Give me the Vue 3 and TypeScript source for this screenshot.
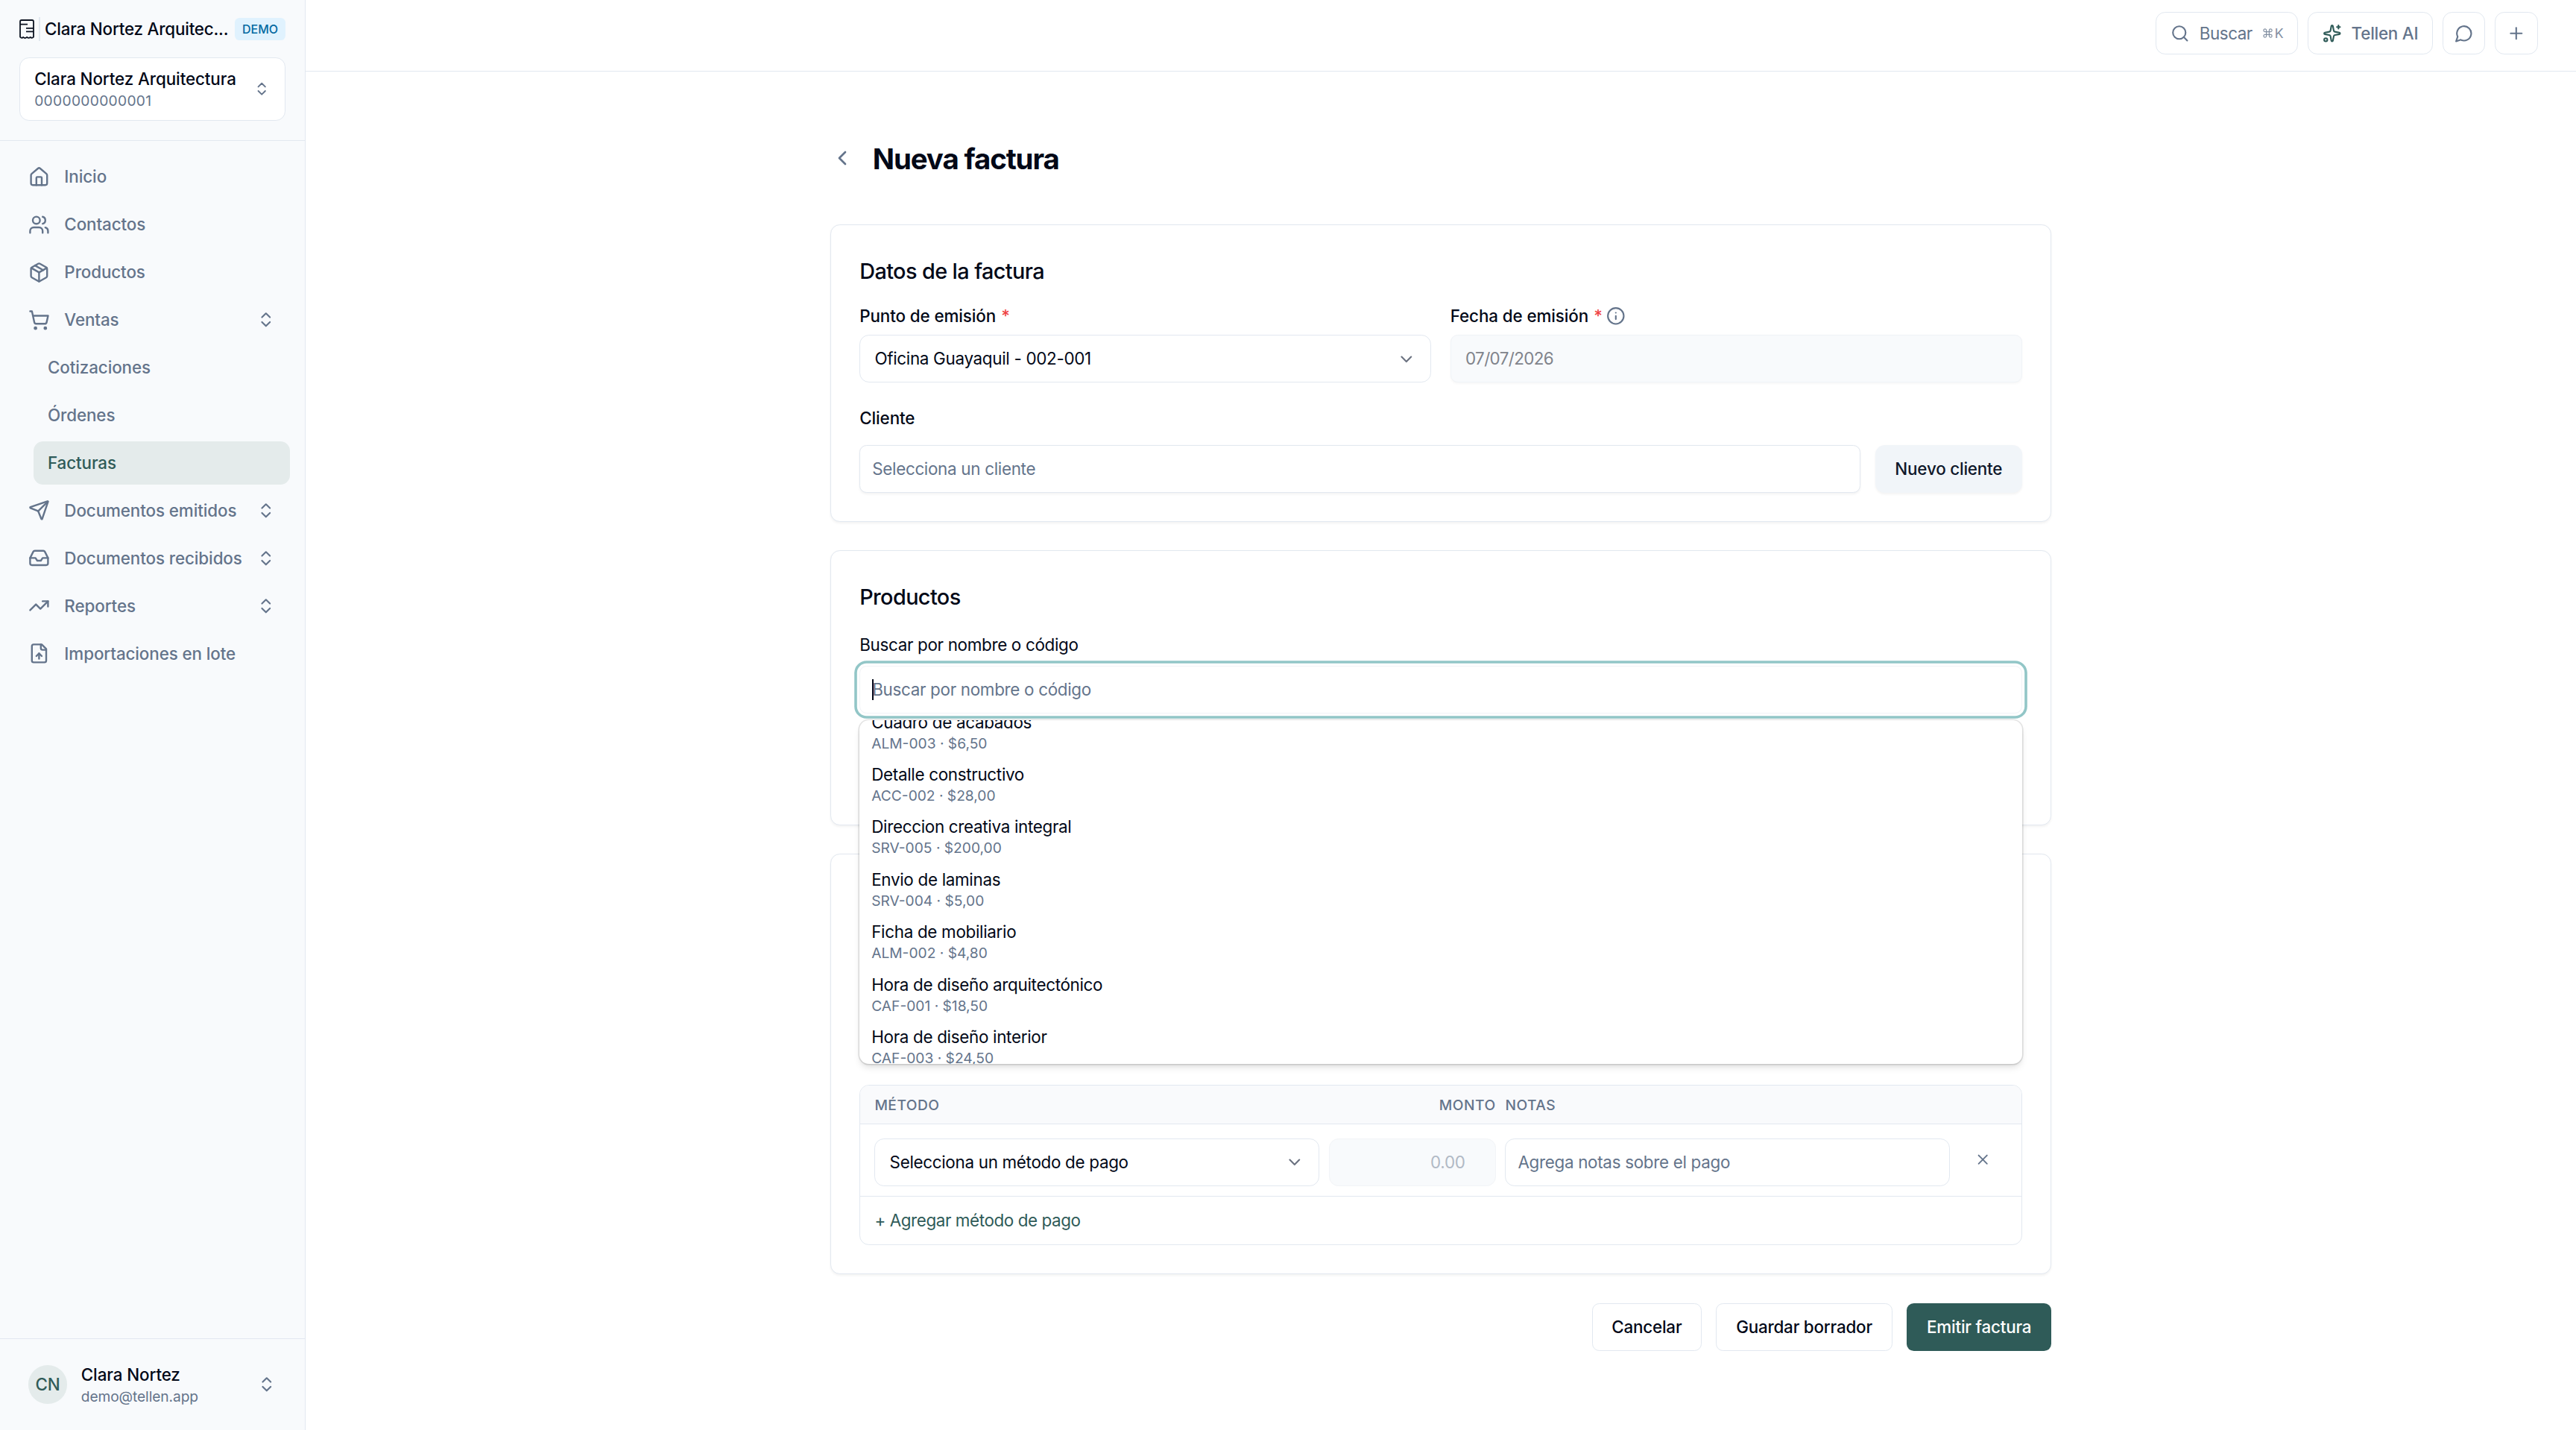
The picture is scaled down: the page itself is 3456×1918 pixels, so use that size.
<script setup lang="ts">
interface NavItem {
  label: string
  icon?: string[]
  expandable?: boolean
  child?: boolean
  active?: boolean
}

interface Product {
  name: string
  code: string
  price: string
}

const icons: Record<string, string[]> = {
  home: [
    'M15 21v-8a1 1 0 0 0-1-1h-4a1 1 0 0 0-1 1v8',
    'M3 10a2 2 0 0 1 .709-1.528l7-5.999a2 2 0 0 1 2.582 0l7 5.999A2 2 0 0 1 21 10v9a2 2 0 0 1-2 2H5a2 2 0 0 1-2-2z',
  ],
  users: [
    'M16 21v-2a4 4 0 0 0-4-4H6a4 4 0 0 0-4 4v2',
    'M5 7a4 4 0 1 0 8 0a4 4 0 1 0-8 0',
    'M22 21v-2a4 4 0 0 0-3-3.87',
    'M16 3.13a4 4 0 0 1 0 7.75',
  ],
  box: [
    'M11 21.73a2 2 0 0 0 2 0l7-4A2 2 0 0 0 21 16V8a2 2 0 0 0-1-1.73l-7-4a2 2 0 0 0-2 0l-7 4A2 2 0 0 0 3 8v8a2 2 0 0 0 1 1.73z',
    'M12 22V12',
    'm3.3 7 8.7 5 8.7-5',
    'm7.5 4.27 9 5.15',
  ],
  cart: [
    'M7 21a1 1 0 1 0 2 0a1 1 0 1 0-2 0',
    'M18 21a1 1 0 1 0 2 0a1 1 0 1 0-2 0',
    'M2.05 2.05h2l2.66 12.42a2 2 0 0 0 2 1.58h9.78a2 2 0 0 0 1.95-1.57l1.65-7.43H5.12',
  ],
  send: [
    'M14.536 21.686a.5.5 0 0 0 .937-.024l6.5-19a.496.496 0 0 0-.635-.635l-19 6.5a.5.5 0 0 0-.024.937l7.93 3.18a2 2 0 0 1 1.112 1.11z',
    'm21.854 2.147-10.94 10.939',
  ],
  inbox: [
    'M22 12h-6l-2 3h-4l-2-3H2',
    'M5.45 5.11 2 12v6a2 2 0 0 0 2 2h16a2 2 0 0 0 2-2v-6l-3.45-6.89A2 2 0 0 0 16.76 4H7.24a2 2 0 0 0-1.79 1.11z',
  ],
  trend: ['m22 7-8.5 8.5-5-5L2 17', 'M16 7h6v6'],
  fileUp: [
    'M15 2H6a2 2 0 0 0-2 2v16a2 2 0 0 0 2 2h12a2 2 0 0 0 2-2V7Z',
    'M14 2v4a2 2 0 0 0 2 2h4',
    'M12 12v6',
    'm15 15-3-3-3 3',
  ],
}

const nav: NavItem[] = [
  { label: 'Inicio', icon: icons.home },
  { label: 'Contactos', icon: icons.users },
  { label: 'Productos', icon: icons.box },
  { label: 'Ventas', icon: icons.cart, expandable: true },
  { label: 'Cotizaciones', child: true },
  { label: 'Órdenes', child: true },
  { label: 'Facturas', child: true, active: true },
  { label: 'Documentos emitidos', icon: icons.send, expandable: true },
  { label: 'Documentos recibidos', icon: icons.inbox, expandable: true },
  { label: 'Reportes', icon: icons.trend, expandable: true },
  { label: 'Importaciones en lote', icon: icons.fileUp },
]

const products: Product[] = [
  { name: 'Cuadro de acabados', code: 'ALM-003', price: '$6,50' },
  { name: 'Detalle constructivo', code: 'ACC-002', price: '$28,00' },
  { name: 'Direccion creativa integral', code: 'SRV-005', price: '$200,00' },
  { name: 'Envio de laminas', code: 'SRV-004', price: '$5,00' },
  { name: 'Ficha de mobiliario', code: 'ALM-002', price: '$4,80' },
  { name: 'Hora de diseño arquitectónico', code: 'CAF-001', price: '$18,50' },
  { name: 'Hora de diseño interior', code: 'CAF-003', price: '$24,50' },
]
</script>

<template>
  <div class="app">
    <aside class="sidebar">
      <div class="side-head">
        <div class="brand">
          <svg class="logo" viewBox="0 0 20 26">
            <path d="M1 23.6V3.2C1 1.9 1.8 1 3 1h14c1.2 0 2 .9 2 2.2v20.4c-1.5 1.5-3 1.5-4.2.2-1.3 1.3-3.300 1.300-4.800 0-1.400 1.300-3.500 1.300-4.800 0C4 25.100 2.500 25.100 1 23.600z" />
            <path d="M1 6.600h10M9 11.800h10M9 16.300h10" />
          </svg>
          <span class="brand-bar"></span>
          <span class="brand-name">Clara Nortez Arquitec...</span>
          <span class="badge">DEMO</span>
        </div>
        <div class="org">
          <div>
            <div class="org-name">Clara Nortez Arquitectura</div>
            <div class="org-id">0000000000001</div>
          </div>
          <svg class="icon i14" viewBox="0 0 24 24"><path d="m7 15 5 5 5-5" /><path d="m7 9 5-5 5 5" /></svg>
        </div>
      </div>

      <nav class="nav">
        <a v-for="item in nav" :key="item.label" class="nav-item" :class="{ child: item.child, active: item.active }">
          <svg v-if="item.icon" class="icon i18" viewBox="0 0 24 24">
            <path v-for="d in item.icon" :key="d" :d="d" />
          </svg>
          <span class="nav-label">{{ item.label }}</span>
          <svg v-if="item.expandable" class="icon i16" viewBox="0 0 24 24"><path d="m7 15 5 5 5-5" /><path d="m7 9 5-5 5 5" /></svg>
        </a>
      </nav>

      <div class="user">
        <span class="avatar">CN</span>
        <div class="user-text">
          <div class="user-name">Clara Nortez</div>
          <div class="user-mail">demo@tellen.app</div>
        </div>
        <svg class="icon i16" viewBox="0 0 24 24"><path d="m7 15 5 5 5-5" /><path d="m7 9 5-5 5 5" /></svg>
      </div>
    </aside>

    <div class="main">
      <header class="topbar">
        <button class="tool search">
          <svg class="icon i16" viewBox="0 0 24 24"><circle cx="11" cy="11" r="8" /><path d="m21 21-4.3-4.3" /></svg>
          <span>Buscar</span>
          <span class="kbd"><svg class="cmd" viewBox="0 0 24 24"><path d="M15 6v12a3 3 0 1 0 3-3H6a3 3 0 1 0 3 3V6a3 3 0 1 0-3 3h12a3 3 0 1 0-3-3" /></svg>K</span>
        </button>
        <button class="tool ai">
          <svg class="icon i16 green" viewBox="0 0 24 24">
            <path d="M11.017 2.814a1 1 0 0 1 1.966 0l1.051 5.558a2 2 0 0 0 1.594 1.594l5.558 1.051a1 1 0 0 1 0 1.966l-5.558 1.051a2 2 0 0 0-1.594 1.594l-1.051 5.558a1 1 0 0 1-1.966 0l-1.051-5.558a2 2 0 0 0-1.594-1.594l-5.558-1.051a1 1 0 0 1 0-1.966l5.558-1.051a2 2 0 0 0 1.594-1.594z" />
            <path d="M20 2v4" /><path d="M22 4h-4" /><circle cx="4" cy="20" r="2" />
          </svg>
          <span>Tellen AI</span>
        </button>
        <button class="tool square">
          <svg class="icon i16" viewBox="0 0 24 24"><path d="M7.9 20A9 9 0 1 0 4 16.1L2 22Z" /></svg>
        </button>
        <button class="tool square">
          <svg class="icon i16" viewBox="0 0 24 24"><path d="M5 12h14" /><path d="M12 5v14" /></svg>
        </button>
      </header>

      <main class="page">
        <div class="title-row">
          <svg class="icon i20" viewBox="0 0 24 24"><path d="m15 18-6-6 6-6" /></svg>
          <h1>Nueva factura</h1>
        </div>

        <section class="card invoice">
          <h2>Datos de la factura</h2>
          <div class="two-cols">
            <div>
              <div class="label">Punto de emisión <span class="req">*</span></div>
              <div class="field select">
                <span>Oficina Guayaquil - 002-001</span>
                <svg class="icon i16 caret-icon" viewBox="0 0 24 24"><path d="m6 9 6 6 6-6" /></svg>
              </div>
            </div>
            <div>
              <div class="label">
                Fecha de emisión <span class="req">*</span>
                <svg class="icon i16 info" viewBox="0 0 24 24"><circle cx="12" cy="12" r="10" /><path d="M12 16v-4" /><path d="M12 8h.01" /></svg>
              </div>
              <div class="field date">07/07/2026</div>
            </div>
          </div>
          <div class="label client-label">Cliente</div>
          <div class="client-row">
            <div class="field text-input shadow">Selecciona un cliente</div>
            <button class="btn soft">Nuevo cliente</button>
          </div>
        </section>

        <section class="card products">
          <h2>Productos</h2>
          <div class="label regular">Buscar por nombre o código</div>
          <div class="combo">
            <div class="field text-input focused"><span class="cursor"></span>Buscar por nombre o código</div>
            <div class="dropdown">
              <div class="options">
                <div v-for="p in products" :key="p.code" class="option">
                  <div class="opt-name">{{ p.name }}</div>
                  <div class="opt-meta">{{ p.code }} · {{ p.price }}</div>
                </div>
              </div>
            </div>
          </div>
        </section>

        <section class="card payments">
          <div class="table">
            <div class="grid thead">
              <span>MÉTODO</span><span class="right">MONTO</span><span>NOTAS</span><span></span>
            </div>
            <div class="grid trow">
              <div class="field select">
                <span>Selecciona un método de pago</span>
                <svg class="icon i16 caret-icon" viewBox="0 0 24 24"><path d="m6 9 6 6 6-6" /></svg>
              </div>
              <div class="field amount">0.00</div>
              <div class="field text-input">Agrega notas sobre el pago</div>
              <div class="remove"><svg class="icon i14" viewBox="0 0 24 24"><path d="M18 6 6 18" /><path d="m6 6 12 12" /></svg></div>
            </div>
            <div class="add">+ Agregar método de pago</div>
          </div>
        </section>

        <div class="actions">
          <button class="btn outline cancel">Cancelar</button>
          <button class="btn outline draft">Guardar borrador</button>
          <button class="btn primary">Emitir factura</button>
        </div>
      </main>
    </div>
  </div>
</template>

<style>
html {
  font-size: 25.6px;
}
body {
  margin: 0;
  background: #fff;
}
</style>

<style scoped>
* {
  box-sizing: border-box;
}
.app {
  display: flex;
  height: 100vh;
  overflow: hidden;
  font-family: Inter, 'Liberation Sans', sans-serif;
  font-size: 0.875rem;
  line-height: 1.25rem;
  letter-spacing: -0.1px;
  color: #020817;
  background: #fff;
}
button {
  font: inherit;
  letter-spacing: inherit;
  color: inherit;
  margin: 0;
}
.icon {
  flex: none;
  display: block;
  fill: none;
  stroke: currentColor;
  stroke-width: 2;
  stroke-linecap: round;
  stroke-linejoin: round;
}
.i14 { width: 0.875rem; height: 0.875rem; }
.i16 { width: 1rem; height: 1rem; }
.i18 { width: 1.125rem; height: 1.125rem; }
.i20 { width: 1.25rem; height: 1.25rem; }

/* Sidebar */
.sidebar {
  flex: none;
  width: 410px;
  display: flex;
  flex-direction: column;
  background: #f8fafc;
  border-right: 1px solid #e2e8f0;
  color: #64748b;
}
.side-head {
  height: 189px;
  padding: 23px 26px 0;
  border-bottom: 1px solid #e2e8f0;
}
.brand {
  display: flex;
  align-items: center;
  height: 32px;
  color: #020817;
  font-weight: 500;
}
.logo {
  flex: none;
  width: 20px;
  height: 26px;
  fill: none;
  stroke: #0b1220;
  stroke-width: 1.8;
  stroke-linejoin: round;
}
.brand-bar {
  flex: none;
  width: 2px;
  height: 32px;
  margin: 0 6px;
  background: #e2e8f0;
}
.brand-name {
  flex: 1;
  white-space: nowrap;
  letter-spacing: -0.2px;
}
.badge {
  flex: none;
  width: 68px;
  height: 30px;
  border-radius: 6.4px;
  background: #e0f2fe;
  color: #0369a1;
  font-size: 16px;
  line-height: 30px;
  letter-spacing: 0;
  text-align: center;
}
.org {
  display: flex;
  align-items: center;
  justify-content: space-between;
  height: 85px;
  margin-top: 22px;
  padding: 0 19.2px;
  border: 1px solid #e2e8f0;
  border-radius: 0.5rem;
  background: #fff;
}
.org-name {
  color: #020817;
  font-weight: 500;
}
.org-id {
  padding-top: 1px;
  font-size: 0.75rem;
  line-height: 1rem;
  letter-spacing: 0.32px;
}
.nav {
  flex: 1;
  display: flex;
  flex-direction: column;
  gap: 0.25rem;
  padding: 0.75rem 20px 0.75rem 0.75rem;
}
.nav-item {
  display: flex;
  align-items: center;
  gap: 0.75rem;
  height: 2.25rem;
  padding: 0 0.75rem;
  border-radius: 0.5rem;
  font-weight: 500;
}
.nav-label {
  flex: 1;
  white-space: nowrap;
}
.child {
  margin-left: 1rem;
}
.active {
  background: #e4ebeb;
  color: #2f5b58;
}
.user {
  display: flex;
  align-items: center;
  gap: 0.75rem;
  height: 123px;
  padding: 0 38.4px;
  border-top: 1px solid #e2e8f0;
}
.avatar {
  width: 2rem;
  height: 2rem;
  border-radius: 50%;
  background: #e4ebeb;
  color: #2f5b58;
  font-weight: 500;
  line-height: 2rem;
  text-align: center;
}
.user-text {
  flex: 1;
}
.user-name {
  color: #020817;
  font-weight: 500;
}
.user-mail {
  padding-top: 1px;
  font-size: 0.75rem;
  line-height: 1rem;
}

/* Top bar */
.main {
  flex: 1;
  min-width: 0;
}
.topbar {
  display: flex;
  justify-content: flex-end;
  gap: 0.5rem;
  height: 96px;
  padding: 15.8px 2rem 0;
  border-bottom: 1px solid #e2e8f0;
}
.tool {
  display: flex;
  align-items: center;
  gap: 0.5rem;
  height: 2.25rem;
  padding: 0 0.75rem;
  border: 1px solid #e2e8f0;
  border-radius: 0.5rem;
  background: #fff;
  color: #64748b;
  white-space: nowrap;
}
.search {
  width: 191px;
  letter-spacing: -0.45px;
}
.ai {
  width: 168px;
  font-weight: 500;
  letter-spacing: -0.25px;
}
.square {
  width: 2.25rem;
  padding: 0;
  justify-content: center;
}
.green { color: #2f5b58; }
.kbd {
  display: flex;
  align-items: center;
  gap: 2px;
  font-size: 17.6px;
  opacity: 0.8;
}
.cmd {
  width: 15px;
  height: 15px;
  fill: none;
  stroke: currentColor;
  stroke-width: 1.9;
}

/* Page */
.page {
  width: 64rem;
  margin: 0 auto;
}
.title-row {
  display: flex;
  align-items: center;
  gap: 25px;
  height: 50px;
  margin: 91px 0 64px;
}
.title-row .icon { color: #64748b; }
h1 {
  margin: 0;
  padding-top: 3px;
  font-size: 1.5rem;
  line-height: 2rem;
  font-weight: 700;
  letter-spacing: -1.1px;
}
h2 {
  margin: 0;
  font-size: 1.125rem;
  line-height: 1.75rem;
  font-weight: 500;
  letter-spacing: -0.58px;
}
.card {
  border: 1px solid #e2e8f0;
  border-radius: 0.5rem;
  background: #fff;
  padding: 0 1.5rem;
  box-shadow: 0 1.6px 3.2px rgba(0, 0, 0, 0.05);
}
.invoice {
  height: 399px;
  padding-top: 40px;
}
.two-cols {
  display: grid;
  grid-template-columns: 1fr 1fr;
  gap: 1rem;
  margin-top: 21px;
}
.label {
  display: flex;
  align-items: center;
  gap: 7px;
  height: 32px;
  font-weight: 500;
}
.regular {
  font-weight: 400;
  letter-spacing: -0.31px;
}
.req { color: #ef4444; }
.info { color: #64748b; margin-left: -2px; }
.field {
  display: flex;
  align-items: center;
  height: 2.5rem;
  border: 1px solid #e2e8f0;
  border-radius: 0.375rem;
  background: #fff;
  white-space: nowrap;
  letter-spacing: -0.3px;
}
.two-cols .field {
  margin-top: 9px;
  padding-top: 1px;
}
.select {
  justify-content: space-between;
  padding: 0 0.75rem;
  border-radius: 0.5rem;
}
.caret-icon { color: #6b7280; }
.date {
  padding: 0 0.75rem;
  background: #f8fafc;
  border-color: #f0f3f7;
  color: #80838b;
  letter-spacing: -0.6px;
  box-shadow: 0 1.6px 3.2px rgba(0, 0, 0, 0.03);
}
.text-input {
  padding: 0 16px;
  color: #64748b;
}
.shadow { box-shadow: 0 1.6px 3.2px rgba(0, 0, 0, 0.05); }
.client-label { margin-top: 32px; }
.client-row {
  display: flex;
  gap: 20px;
  margin-top: 20px;
}
.client-row .field { flex: 1; }
.btn {
  height: 2.5rem;
  padding: 0;
  border: 1px solid #e2e8f0;
  border-radius: 0.375rem;
  background: #fff;
  font-weight: 500;
  letter-spacing: -0.2px;
  white-space: nowrap;
}
.soft {
  width: 197px;
  border: 0;
  border-radius: 0.5rem;
  background: #f1f5f9;
  color: #0f172a;
  box-shadow: 0 1.6px 3.2px rgba(0, 0, 0, 0.05);
}
.products {
  height: 369px;
  margin-top: 38px;
  padding-top: 40px;
}
.products .label { margin-top: 25px; }
.combo {
  position: relative;
  margin-top: 12px;
}
.focused {
  border-color: #f1f3f7;
  box-shadow: 0 0 0 3.2px #fff, 0 0 0 6.8px #92c6c7;
}
.cursor {
  width: 2px;
  height: 28px;
  margin-right: -2px;
  background: #020817;
}
.dropdown {
  position: absolute;
  z-index: 2;
  top: 73px;
  left: 0;
  right: 0;
  height: 461px;
  overflow: hidden;
  border-radius: 0.5rem;
  background: #fff;
  box-shadow: 0 0 0 1.6px rgba(0, 0, 0, 0.1), 0 6.4px 9.6px -1.6px rgba(0, 0, 0, 0.1), 0 3.2px 6.4px -3.2px rgba(0, 0, 0, 0.1);
}
.options { margin-top: -19.5px; }
.option { padding: 0.25rem 16px; }
.opt-name { letter-spacing: -0.3px; }
.opt-meta {
  font-size: 0.75rem;
  line-height: 1rem;
  letter-spacing: 0;
  color: #64748b;
}
.payments {
  height: 564px;
  margin-top: 38px;
  padding-top: 309px;
}
.table {
  border: 1px solid #e2e8f0;
  border-radius: 0.5rem;
  overflow: hidden;
}
.grid {
  display: grid;
  grid-template-columns: 1fr 8.75rem 1fr 2.5rem;
  gap: 0.5rem;
  padding: 0 0.75rem;
  border-bottom: 1px solid #e2e8f0;
}
.thead {
  height: 52px;
  align-items: center;
  background: #f9fafc;
  color: #64748b;
  font-size: 0.75rem;
  font-weight: 500;
  letter-spacing: 0.025em;
}
.right { text-align: right; }
.trow {
  height: 97px;
  padding-top: 19px;
}
.trow .field { border-radius: 0.5rem; }
.trow .amount {
  justify-content: flex-end;
  padding-right: 40px;
  background: #f8fafc;
  border-color: #f2f4f7;
  color: #b1b9c5;
}
.remove {
  display: flex;
  align-items: center;
  justify-content: center;
  height: 57px;
  color: #64748b;
}
.add {
  height: 64px;
  padding: 0 0.75rem;
  line-height: 64px;
  letter-spacing: -0.4px;
  color: #2f5b58;
}
.actions {
  display: flex;
  justify-content: flex-end;
  gap: 0.75rem;
  margin-top: 39px;
}
.cancel { width: 147px; }
.draft { width: 237px; }
.primary {
  width: 194px;
  border: 0;
  background: #2f5b58;
  color: #fff;
}
</style>
